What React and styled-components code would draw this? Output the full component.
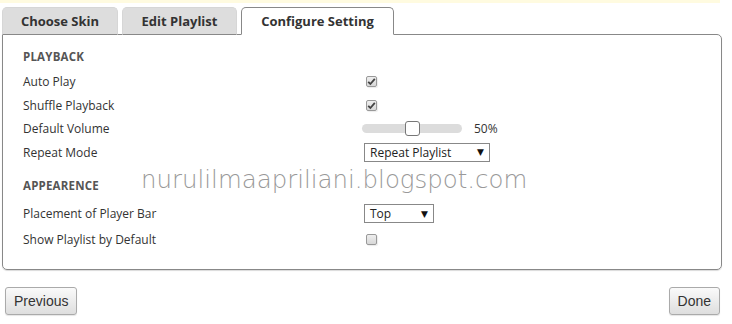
import React from 'react';
import styled, { createGlobalStyle } from 'styled-components';

const Global = createGlobalStyle`
  body {
    margin: 0;
    background: #fff;
    font-family: "Open Sans", "Liberation Sans", sans-serif;
  }
`;

const Page = styled.div`
  position: relative;
  width: 732px;
  height: 324px;
  overflow: hidden;
`;

const Notice = styled.div`
  width: 720px;
  height: 3px;
  background: #fffbe0;
`;

const Tabs = styled.div`
  display: flex;
  gap: 4px;
  padding: 4px 0 0 2px;
  position: relative;
  z-index: 1;
`;

const Tab = styled.div`
  width: ${p => p.$w}px;
  height: 28px;
  box-sizing: border-box;
  display: flex;
  align-items: center;
  justify-content: center;
  font-size: 13px;
  font-weight: 700;
  color: #333;
  border-radius: 5px 5px 0 0;
  background: ${p => (p.$active ? '#fff' : '#dddddd')};
  border: 1px solid ${p => (p.$active ? '#888' : '#d6d6d6')};
  border-bottom: ${p => (p.$active ? '1px solid #fff' : '1px solid #888')};
  margin-bottom: -1px;
`;

const Panel = styled.div`
  margin-left: 2px;
  width: 720px;
  height: 236px;
  box-sizing: border-box;
  border: 1px solid #888;
  border-radius: 0 5px 5px 5px;
  box-shadow: 0 1px 1px rgba(0, 0, 0, 0.15);
  padding: 14px 0 0 20px;
`;

const Section = styled.div`
  font-size: 11.5px;
  font-weight: 700;
  color: #555;
  letter-spacing: 0.2px;
  height: 16px;
  line-height: 16px;
  margin-top: ${p => p.$top || 0}px;
  margin-bottom: ${p => p.$bottom || 0}px;
`;

const Row = styled.div`
  display: grid;
  grid-template-columns: 339px 1fr;
  align-items: center;
  height: ${p => p.$h || 23.4}px;
  font-size: 12px;
  color: #333;
`;

const Control = styled.div`
  display: flex;
  align-items: center;
  padding-left: ${p => p.$pad || 0}px;
`;

const Box = styled.span`
  width: 11px;
  height: 11px;
  box-sizing: border-box;
  border: 1px solid #999;
  border-radius: 2px;
  background: linear-gradient(#eee, #d8d8d8);
  box-shadow: 1px 1px 1px rgba(0, 0, 0, 0.08);
  display: flex;
  align-items: center;
  justify-content: center;
`;

const Check = ({ on }) => (
  <Box>
    {on && (
      <svg width="9" height="9" viewBox="0 0 9 9">
        <path d="M1.2 4.8 L3.4 7 L7.8 1.8" fill="none" stroke="#444" strokeWidth="1.8" />
      </svg>
    )}
  </Box>
);

const Track = styled.div`
  position: relative;
  width: 100px;
  height: 9px;
  border-radius: 5px;
  background: #dcdcdc;
`;

const Handle = styled.div`
  position: absolute;
  top: -3px;
  width: 15px;
  height: 15px;
  box-sizing: border-box;
  border: 1px solid #777;
  border-radius: 3px;
  background: #fff;
`;

const Value = styled.span`
  margin-left: 12px;
  font-size: 12px;
  color: #333;
`;

const Select = styled.div`
  width: ${p => p.$w}px;
  height: 19px;
  box-sizing: border-box;
  border: 1px solid #888;
  display: flex;
  align-items: center;
  justify-content: space-between;
  padding: 0 5px 0 5px;
  font-size: 12px;
  color: #222;
  background: #fff;
`;

const Arrow = styled.span`
  font-family: "DejaVu Sans", sans-serif;
  font-size: 9px;
  color: #111;
`;

const Footer = styled.div`
  display: flex;
  justify-content: space-between;
  padding: 17px 12px 0 5px;
`;

const Button = styled.button`
  height: 28px;
  padding: 0 ${p => p.$px}px;
  border: 1px solid #aaa;
  border-radius: 3px;
  background: linear-gradient(#fafafa, #dedede);
  font-family: "Liberation Sans", Arial, sans-serif;
  font-size: 14px;
  color: #333;
  box-shadow: 0 1px 1px rgba(0, 0, 0, 0.1);
`;

const Watermark = styled.div`
  position: absolute;
  left: 141px;
  top: 165px;
  font-family: "DejaVu Sans", sans-serif;
  font-weight: 200;
  font-size: 24.45px;
  color: #999;
  pointer-events: none;
`;

export default function App() {
  return (
    <Page>
      <Global />
      <Notice />
      <Tabs>
        <Tab $w={116}>Choose Skin</Tab>
        <Tab $w={115}>Edit Playlist</Tab>
        <Tab $w={153} $active>Configure Setting</Tab>
      </Tabs>
      <Panel>
        <Section $bottom={5}>PLAYBACK</Section>
        <Row>
          <span>Auto Play</span>
          <Control $pad={4}><Check on /></Control>
        </Row>
        <Row>
          <span>Shuffle Playback</span>
          <Control $pad={4}><Check on /></Control>
        </Row>
        <Row>
          <span>Default Volume</span>
          <Control>
            <Track>
              <Handle style={{ left: 43 }} />
            </Track>
            <Value>50%</Value>
          </Control>
        </Row>
        <Row $h={24}>
          <span>Repeat Mode</span>
          <Control $pad={2}>
            <Select $w={126}>Repeat Playlist<Arrow>▼</Arrow></Select>
          </Control>
        </Row>
        <Section $top={14} $bottom={6}>APPEARENCE</Section>
        <Row $h={27}>
          <span>Placement of Player Bar</span>
          <Control $pad={2}>
            <Select $w={70}>Top<Arrow>▼</Arrow></Select>
          </Control>
        </Row>
        <Row $h={25}>
          <span>Show Playlist by Default</span>
          <Control $pad={4}><Check /></Control>
        </Row>
      </Panel>
      <Footer>
        <Button $px={8}>Previous</Button>
        <Button $px={8}>Done</Button>
      </Footer>
      <Watermark>nurulilmaapriliani.blogspot.com</Watermark>
    </Page>
  );
}
